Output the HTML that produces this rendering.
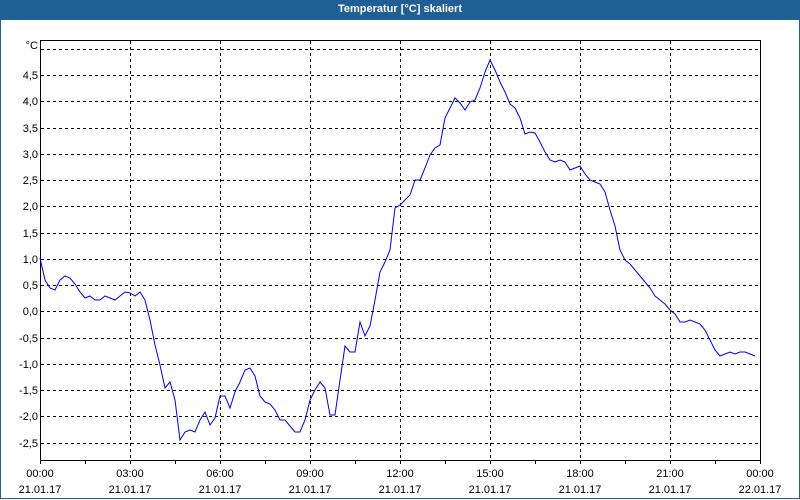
<!DOCTYPE html>
<html><head><meta charset="utf-8"><style>
html,body{margin:0;padding:0;width:800px;height:500px;overflow:hidden;background:#fff}
.frame{position:absolute;left:0;top:0;width:798px;height:498px;border:1px solid #1f5f96;border-top:none}
.title{position:absolute;left:0;top:0;width:800px;height:20px;background:#1f5f96;color:#fff;font:bold 11px "Liberation Sans",sans-serif;text-align:center;line-height:19px}
svg{position:absolute;left:0;top:0}
text{font-family:"Liberation Sans",sans-serif;font-size:11px;fill:#000}
</style></head><body>
<div class="frame"></div>
<div class="title">Temperatur [°C] skaliert</div>
<svg width="800" height="500">
<g stroke="#000" stroke-width="1" stroke-dasharray="3,3" shape-rendering="crispEdges">
<line x1="41" y1="49.5" x2="760" y2="49.5"/>
<line x1="41" y1="75.5" x2="760" y2="75.5"/>
<line x1="41" y1="101.5" x2="760" y2="101.5"/>
<line x1="41" y1="128.5" x2="760" y2="128.5"/>
<line x1="41" y1="154.5" x2="760" y2="154.5"/>
<line x1="41" y1="180.5" x2="760" y2="180.5"/>
<line x1="41" y1="206.5" x2="760" y2="206.5"/>
<line x1="41" y1="233.5" x2="760" y2="233.5"/>
<line x1="41" y1="259.5" x2="760" y2="259.5"/>
<line x1="41" y1="285.5" x2="760" y2="285.5"/>
<line x1="41" y1="311.5" x2="760" y2="311.5"/>
<line x1="41" y1="338.5" x2="760" y2="338.5"/>
<line x1="41" y1="364.5" x2="760" y2="364.5"/>
<line x1="41" y1="390.5" x2="760" y2="390.5"/>
<line x1="41" y1="416.5" x2="760" y2="416.5"/>
<line x1="41" y1="443.5" x2="760" y2="443.5"/>
<line x1="130.5" y1="41" x2="130.5" y2="460"/>
<line x1="220.5" y1="41" x2="220.5" y2="460"/>
<line x1="310.5" y1="41" x2="310.5" y2="460"/>
<line x1="400.5" y1="41" x2="400.5" y2="460"/>
<line x1="490.5" y1="41" x2="490.5" y2="460"/>
<line x1="580.5" y1="41" x2="580.5" y2="460"/>
<line x1="670.5" y1="41" x2="670.5" y2="460"/>
</g>
<g stroke="#000" stroke-width="1" fill="none" shape-rendering="crispEdges">
<rect x="40.5" y="40.5" width="720" height="420"/>
<path d="M40.5 460v4M85.5 460v4M130.5 460v4M175.5 460v4M220.5 460v4M265.5 460v4M310.5 460v4M355.5 460v4M400.5 460v4M445.5 460v4M490.5 460v4M535.5 460v4M580.5 460v4M625.5 460v4M670.5 460v4M715.5 460v4M760.5 460v4"/>
</g>
<polyline fill="none" stroke="#0000ee" stroke-width="1" points="40,258 45,280 50,288 55,290 60,280 65,276 70,278 75,284 80,292 85,298 90,296 95,300 100,300 105,296 110,298 115,300 120,296 125,292 130,293 135,296 140,292 145,300 150,320 155,345 160,365 165,388 170,382 175,400 180,440 185,432 190,430 195,432 200,420 205,412 210,425 215,418 220,396 225,396 230,408 235,392 240,382 245,370 250,368 255,376 260,396 265,402 270,404 275,410 280,420 285,420 290,426 295,432 300,432 305,420 310,400 315,390 320,382 325,388 330,415 335,415 340,380 345,346 350,352 355,352 360,322 365,336 370,326 375,300 380,272 385,262 390,250 395,208 400,205 405,200 410,195 415,180 420,180 425,168 430,155 435,148 440,145 445,118 450,108 455,98 460,103 465,110 470,102 475,100 480,88 485,72 490,60 495,70 500,82 505,92 510,104 515,108 520,118 525,134 530,132 535,133 540,142 545,152 550,160 555,162 560,160 565,162 570,170 575,168 580,166 585,174 590,180 595,182 600,184 605,192 610,210 615,226 620,250 625,260 630,264 635,270 640,276 645,282 650,288 655,296 660,300 665,304 670,310 675,314 680,322 685,322 690,320 695,322 700,324 705,330 710,340 715,350 720,356 725,354 730,352 735,354 740,352 745,352 750,354 755,356"/>
<g text-anchor="end">
<text x="38" y="49">°C</text>
<text x="38" y="79">4,5</text>
<text x="38" y="105">4,0</text>
<text x="38" y="132">3,5</text>
<text x="38" y="158">3,0</text>
<text x="38" y="184">2,5</text>
<text x="38" y="210">2,0</text>
<text x="38" y="237">1,5</text>
<text x="38" y="263">1,0</text>
<text x="38" y="289">0,5</text>
<text x="38" y="315">0,0</text>
<text x="38" y="342">-0,5</text>
<text x="38" y="368">-1,0</text>
<text x="38" y="394">-1,5</text>
<text x="38" y="420">-2,0</text>
<text x="38" y="447">-2,5</text>
</g>
<g text-anchor="middle">
<text x="40" y="477">00:00</text><text x="40" y="493">21.01.17</text>
<text x="130" y="477">03:00</text><text x="130" y="493">21.01.17</text>
<text x="220" y="477">06:00</text><text x="220" y="493">21.01.17</text>
<text x="310" y="477">09:00</text><text x="310" y="493">21.01.17</text>
<text x="400" y="477">12:00</text><text x="400" y="493">21.01.17</text>
<text x="490" y="477">15:00</text><text x="490" y="493">21.01.17</text>
<text x="580" y="477">18:00</text><text x="580" y="493">21.01.17</text>
<text x="670" y="477">21:00</text><text x="670" y="493">21.01.17</text>
<text x="760" y="477">00:00</text><text x="760" y="493">22.01.17</text>
</g>
</svg>
</body></html>
